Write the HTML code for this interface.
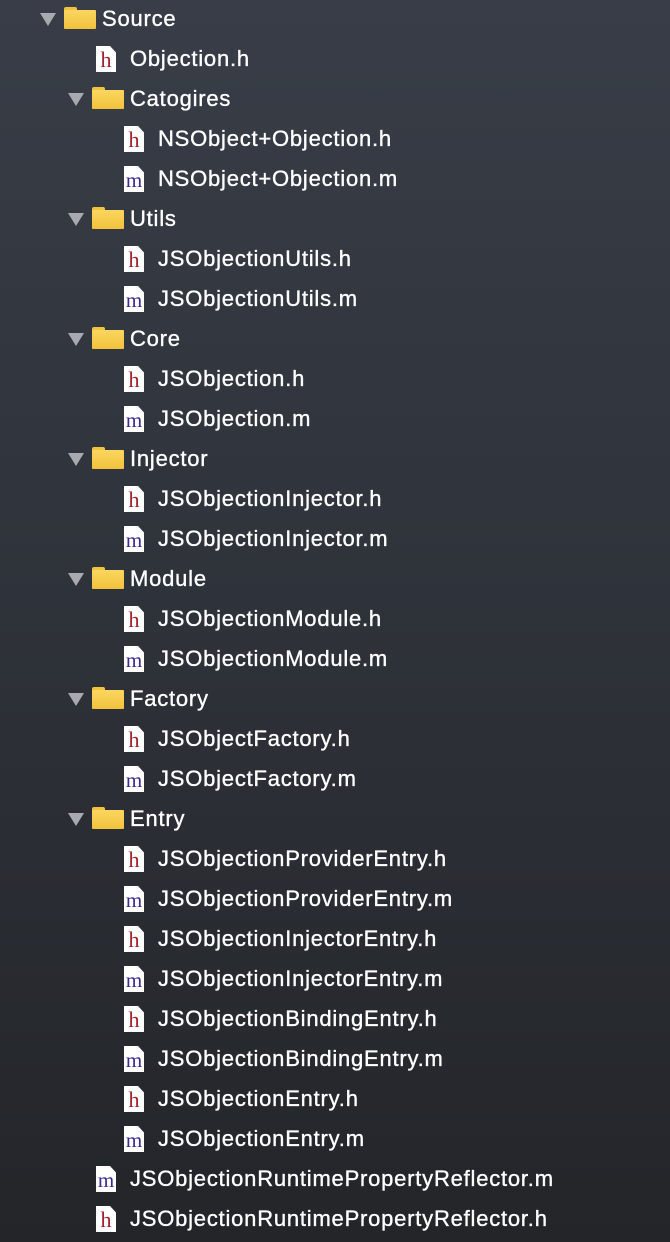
<html><head><style>
body{margin:0;width:670px;height:1242px;background:linear-gradient(#383d47,#2e3239 50%,#232529);font-family:"Liberation Sans",sans-serif;color:#fff;overflow:hidden}
.r{position:absolute;height:40px;display:flex;align-items:center;font-size:22px;letter-spacing:0.78px;-webkit-text-stroke:0.35px #fff}
.t{width:0;height:0;border-left:8px solid transparent;border-right:8px solid transparent;border-top:13px solid #a8aaaf;margin-right:8px}
.f{width:32px;height:22px;position:relative;margin-right:6px;margin-top:-2px}
.f:before{content:"";position:absolute;left:0;top:0;width:13px;height:5px;background:#f0c23e;border-radius:2px 2px 0 0}
.f:after{content:"";position:absolute;left:0;top:3px;width:32px;height:19px;background:linear-gradient(#fbd660,#f2c23c);border-radius:1px}
.i{width:20px;height:26px;background:#fff;position:relative;margin-right:14px;clip-path:polygon(0 0,70% 0,100% 25%,100% 100%,0 100%);font-family:"Liberation Serif",serif;font-size:22px;text-align:center;line-height:28px;letter-spacing:0;-webkit-text-stroke:0}
.i.h{color:#a0222e}.i.m{color:#3b2a8f;font-size:21px}
</style></head><body>
<div class="r" style="top:-1px;left:40px"><div class="t"></div><div class="f"></div>Source</div>
<div class="r" style="top:39px;left:96px"><div class="i h">h</div>Objection.h</div>
<div class="r" style="top:79px;left:68px"><div class="t"></div><div class="f"></div>Catogires</div>
<div class="r" style="top:119px;left:124px"><div class="i h">h</div>NSObject+Objection.h</div>
<div class="r" style="top:159px;left:124px"><div class="i m">m</div>NSObject+Objection.m</div>
<div class="r" style="top:199px;left:68px"><div class="t"></div><div class="f"></div>Utils</div>
<div class="r" style="top:239px;left:124px"><div class="i h">h</div>JSObjectionUtils.h</div>
<div class="r" style="top:279px;left:124px"><div class="i m">m</div>JSObjectionUtils.m</div>
<div class="r" style="top:319px;left:68px"><div class="t"></div><div class="f"></div>Core</div>
<div class="r" style="top:359px;left:124px"><div class="i h">h</div>JSObjection.h</div>
<div class="r" style="top:399px;left:124px"><div class="i m">m</div>JSObjection.m</div>
<div class="r" style="top:439px;left:68px"><div class="t"></div><div class="f"></div>Injector</div>
<div class="r" style="top:479px;left:124px"><div class="i h">h</div>JSObjectionInjector.h</div>
<div class="r" style="top:519px;left:124px"><div class="i m">m</div>JSObjectionInjector.m</div>
<div class="r" style="top:559px;left:68px"><div class="t"></div><div class="f"></div>Module</div>
<div class="r" style="top:599px;left:124px"><div class="i h">h</div>JSObjectionModule.h</div>
<div class="r" style="top:639px;left:124px"><div class="i m">m</div>JSObjectionModule.m</div>
<div class="r" style="top:679px;left:68px"><div class="t"></div><div class="f"></div>Factory</div>
<div class="r" style="top:719px;left:124px"><div class="i h">h</div>JSObjectFactory.h</div>
<div class="r" style="top:759px;left:124px"><div class="i m">m</div>JSObjectFactory.m</div>
<div class="r" style="top:799px;left:68px"><div class="t"></div><div class="f"></div>Entry</div>
<div class="r" style="top:839px;left:124px"><div class="i h">h</div>JSObjectionProviderEntry.h</div>
<div class="r" style="top:879px;left:124px"><div class="i m">m</div>JSObjectionProviderEntry.m</div>
<div class="r" style="top:919px;left:124px"><div class="i h">h</div>JSObjectionInjectorEntry.h</div>
<div class="r" style="top:959px;left:124px"><div class="i m">m</div>JSObjectionInjectorEntry.m</div>
<div class="r" style="top:999px;left:124px"><div class="i h">h</div>JSObjectionBindingEntry.h</div>
<div class="r" style="top:1039px;left:124px"><div class="i m">m</div>JSObjectionBindingEntry.m</div>
<div class="r" style="top:1079px;left:124px"><div class="i h">h</div>JSObjectionEntry.h</div>
<div class="r" style="top:1119px;left:124px"><div class="i m">m</div>JSObjectionEntry.m</div>
<div class="r" style="top:1159px;left:96px"><div class="i m">m</div>JSObjectionRuntimePropertyReflector.m</div>
<div class="r" style="top:1199px;left:96px"><div class="i h">h</div>JSObjectionRuntimePropertyReflector.h</div>
</body></html>
